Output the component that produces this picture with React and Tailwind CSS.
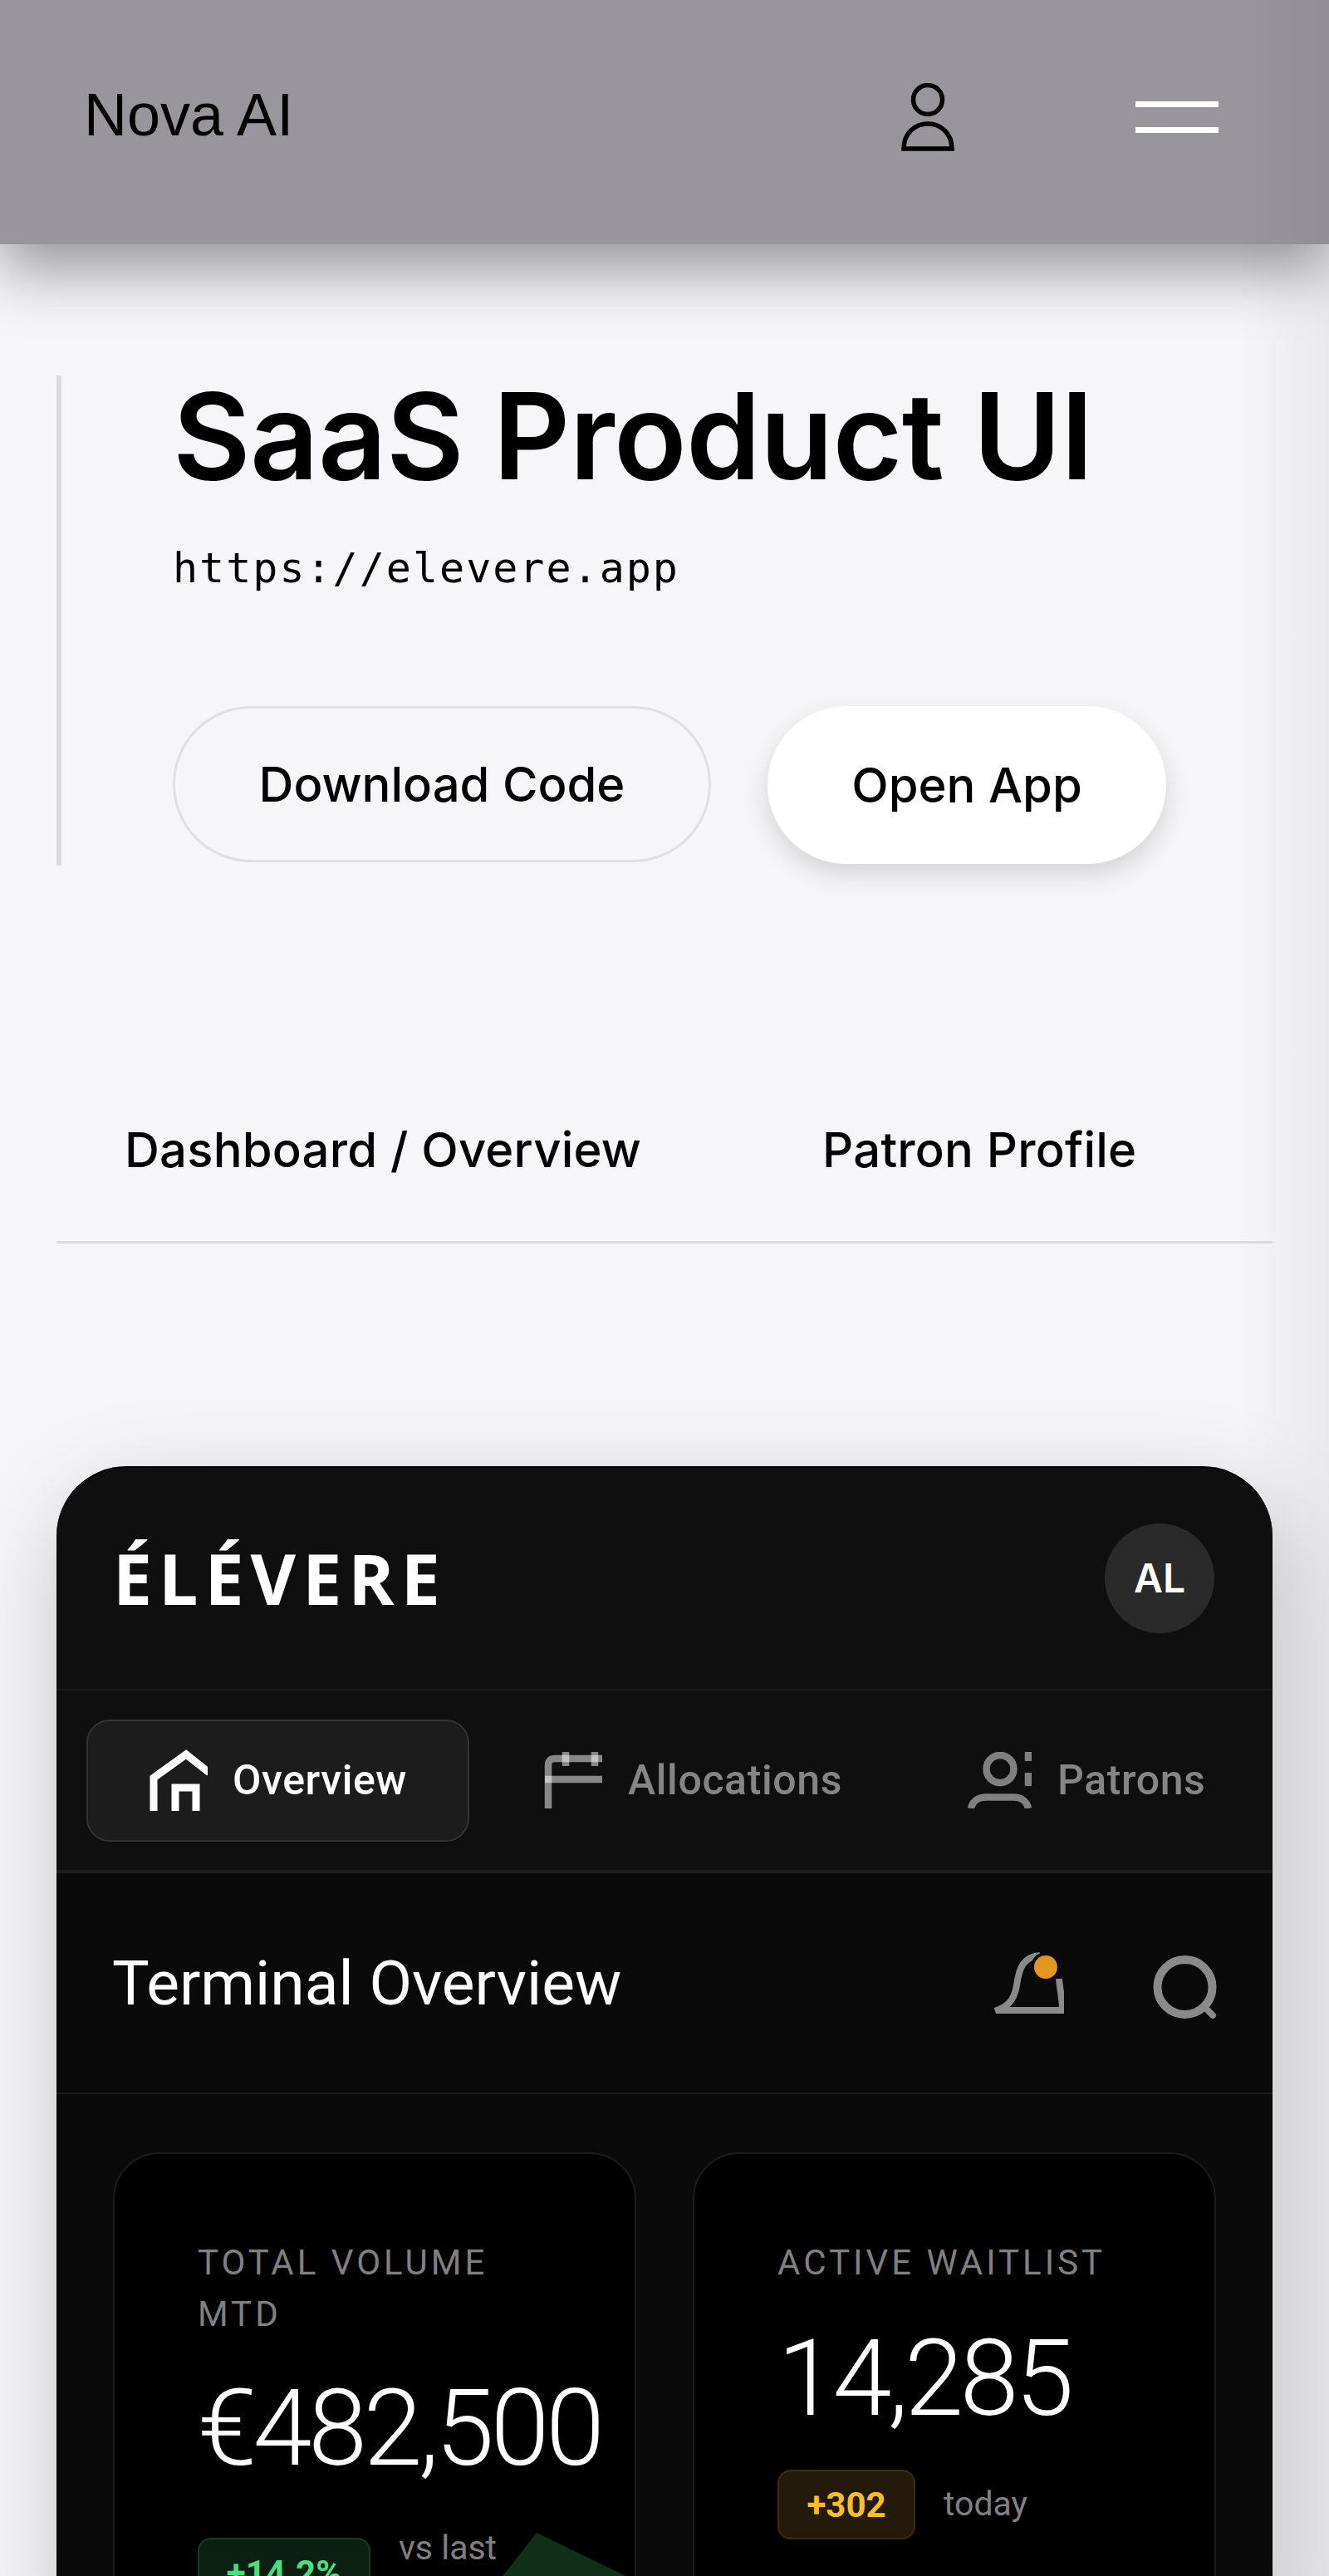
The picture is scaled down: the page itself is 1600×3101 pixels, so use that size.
const inter = "font-['Inter',sans-serif]";
const roboto = "font-['Roboto',sans-serif]";

function UserIcon() {
  return (
    <svg width="64" height="82" viewBox="0 0 64 82" fill="none" stroke="#000" strokeWidth="5.5">
      <circle cx="32" cy="20" r="17.5" />
      <path d="M3 79c0-18 13-30 29-30s29 12 29 30z" />
    </svg>
  );
}

function HomeIcon() {
  return (
    <svg width="70" height="74" viewBox="0 0 70 74" fill="none" stroke="#fff" strokeWidth="9">
      <path d="M5 74V34L44 6l28 22" />
      <path d="M31 74V46h25v28" />
    </svg>
  );
}

// Strokes are translucent so the crossings show up lighter
function AllocIcon() {
  return (
    <svg width="70" height="68" viewBox="0 0 70 68" fill="none" stroke="#fff" strokeOpacity="0.5" strokeWidth="8.5">
      <path d="M5 68V16q0-8 8-8h57" />
      <path d="M1 33h69" />
      <path d="M26 0v17M61 0v17" />
    </svg>
  );
}

function PatronsIcon() {
  return (
    <svg width="77" height="68" viewBox="0 0 77 68" fill="none" stroke="#808080" strokeWidth="8.5">
      <circle cx="39" cy="20.5" r="16.5" />
      <path d="M4 68c2-10 10-13.500 18-13.500h33c8 0 16 3.500 18 13.500" />
      <path d="M73 0v11M73 25v16" />
    </svg>
  );
}

function BellIcon() {
  return (
    <svg width="84" height="74" viewBox="0 0 84 74" fill="none">
      <path
        d="M1 71c14-5 23-12 26-31 3-22 8-34 28-36M78 32c1 13 4 24 4 38H3"
        stroke="#8a8a8a"
        strokeWidth="8"
      />
      <circle cx="62" cy="18" r="18" fill="#0a0a0a" />
      <circle cx="62" cy="18" r="14" fill="#e0991e" />
    </svg>
  );
}

function SearchIcon() {
  return (
    <svg width="77" height="76" viewBox="0 0 77 76" fill="none" stroke="#8a8a8a" strokeWidth="10">
      <circle cx="38.500" cy="38" r="33" />
      <path d="M62 62l10 10" strokeWidth="8" strokeLinecap="round" />
    </svg>
  );
}

function TabButton({ icon, label, active }) {
  return (
    <div
      className={`flex h-[147px] shrink-0 items-center rounded-[28px] ${
        active
          ? "w-[461px] gap-[30px] border-2 border-[#333] bg-[#1c1c1c] pl-[74px] text-white"
          : "gap-[31px] text-[#858585]"
      }`}
    >
      {icon}
      <span className={`${roboto} text-[50px] font-medium tracking-[0.6px]`}>{label}</span>
    </div>
  );
}

function StatCard({ label, value, valueClass, children }) {
  return (
    <div className="relative h-[600px] flex-1 overflow-hidden rounded-[56px] border-2 border-[#1c1c1c] bg-black pl-[100px] pt-[100px]">
      <div className={`${roboto} w-[440px] text-[42px] leading-[62px] tracking-[4px] text-[#808080]`}>{label}</div>
      <div className={`${roboto} font-light leading-none tracking-[-4.5px] text-white ${valueClass}`}>{value}</div>
      {children}
    </div>
  );
}

export default function App() {
  return (
    <div className={`${inter} relative h-[3101px] w-[1600px] overflow-hidden bg-[#f6f6f9] text-black`}>
      <header className="relative z-10 flex h-[294px] items-center bg-[#98969c] pb-[12px] pl-[101px] pr-[133px] shadow-[0_30px_70px_rgba(0,0,0,0.4)]">
        <span className="mb-[6px] font-['Liberation_Sans',sans-serif] text-[72px] leading-none">Nova AI</span>
        <div className="ml-auto mr-[218px]">
          <UserIcon />
        </div>
        <div className="flex w-[100px] flex-col gap-[24px]">
          <div className="h-[7px] bg-white" />
          <div className="h-[7px] bg-white" />
        </div>
      </header>

      <section className="ml-[68px] mt-[158px] flex h-[590px] flex-col border-l-[6px] border-[#dcdce0] pl-[134px]">
        <h1 className="text-[144px] font-semibold leading-[146px] tracking-[-0.7px]">SaaS Product UI</h1>
        <p className="mt-[56px] font-['DejaVu_Sans_Mono',monospace] text-[50px] leading-[60px] tracking-[2px]">
          https://elevere.app
        </p>
        <div className="mt-[136px] flex gap-[68px]">
          <button className="h-[188px] w-[648px] rounded-full border-[3px] border-[#e0e0e4] text-[58px] font-medium">
            Download Code
          </button>
          <button className="h-[190px] w-[480px] rounded-full bg-white text-[58px] font-medium shadow-[0_12px_30px_rgba(0,0,0,0.14)]">
            Open App
          </button>
        </div>
      </section>

      <nav className="mx-[68px] mt-[310px] flex h-[145px] items-start border-b-[3px] border-[#dddde1] pl-[82px]">
        <span className="text-[58px] font-medium leading-[64px] tracking-[0.2px]">Dashboard / Overview</span>
        <span className="ml-[218px] text-[58px] font-medium leading-[64px] tracking-[0.2px]">Patron Profile</span>
      </nav>

      <main className="mx-[68px] mt-[268px] h-[1400px] overflow-hidden rounded-t-[84px] border-t-2 border-black bg-[#0f0f0f] shadow-[10px_40px_120px_rgba(0,0,0,0.22)]">
        <div className="flex h-[268px] items-center justify-between border-b-2 border-[#1a1a1a] pl-[68px] pr-[70px]">
          <span className="font-['Open_Sans',sans-serif] text-[84px] font-bold tracking-[8px] text-white">ÉLÉVERE</span>
          <div className="flex h-[132px] w-[132px] items-center justify-center rounded-full bg-[#2a2a2a] text-[48px] font-semibold text-white">
            AL
          </div>
        </div>
        <div className="flex h-[220px] items-center border-b-4 border-[#1c1c1c] pl-[36px]">
          <TabButton active icon={<HomeIcon />} label="Overview" />
          <div className="ml-[90px]">
            <TabButton icon={<AllocIcon />} label="Allocations" />
          </div>
          <div className="ml-[151px]">
            <TabButton icon={<PatronsIcon />} label="Patrons" />
          </div>
        </div>
        <div className="flex h-[266px] items-center border-b-2 border-[#1a1a1a] bg-[#0a0a0a] px-[67px]">
          <span className={`${roboto} text-[75px] text-white`}>Terminal Overview</span>
          <div className="ml-auto mr-[107px]">
            <BellIcon />
          </div>
          <div className="mt-[10px]">
            <SearchIcon />
          </div>
        </div>
        <div className="flex gap-[68px] bg-[#0a0a0a] px-[68px] pt-[70px]">
          <StatCard label="TOTAL VOLUME MTD" value="€482,500" valueClass="mt-[42px] whitespace-nowrap text-[128px]">
            <div className="mt-[50px] flex items-start gap-[34px]">
              <div className="mt-[18px] flex h-[84px] w-[208px] items-center justify-center rounded-[16px] border-2 border-[#163d24] bg-[#0b1f12] font-['Roboto',sans-serif] text-[42px] font-bold text-[#4ade80]">
                +14.2%
              </div>
              <span className={`${roboto} w-[130px] text-[41px] text-[#808080]`}>vs last month</span>
            </div>
            <svg className="absolute right-0 top-[456px]" width="212" height="120" viewBox="0 0 212 120">
              <path d="M94 0l118 57v63H0z" fill="#113019" />
            </svg>
          </StatCard>
          <StatCard label="ACTIVE WAITLIST" value="14,285" valueClass="mt-[44px] text-[128px]">
            <div className="mt-[46px] flex items-center gap-[34px]">
              <div className="flex h-[84px] w-[166px] items-center justify-center rounded-[16px] border-2 border-[#3d2c14] bg-[#241a0c] font-['Roboto',sans-serif] text-[42px] font-bold text-[#fbbf24]">
                +302
              </div>
              <span className={`${roboto} text-[41px] text-[#808080]`}>today</span>
            </div>
          </StatCard>
        </div>
      </main>

      {/* soft darkening along the right edge of the viewport */}
      <div className="pointer-events-none absolute inset-y-0 right-0 z-20 w-[110px] bg-gradient-to-r from-transparent to-black/5" />
    </div>
  );
}
